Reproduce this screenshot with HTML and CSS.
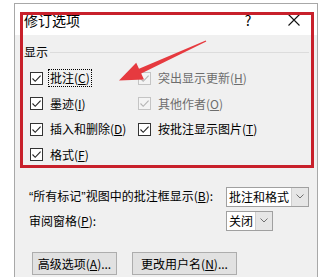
FILE: index.html
```html
<!DOCTYPE html>
<html lang="zh-CN">
<head>
    <meta charset="UTF-8">
    <meta name="viewport" content="width=device-width, initial-scale=1.0">
    <title>修订选项</title>
    <link rel="stylesheet" href="styles.css">
</head>
<body>
    <div class="dialog">
        <div class="titlebar">
            <span class="title">修订选项</span>
            <span class="help">?</span>
            <span class="close">
                <svg width="12" height="12" viewBox="0 0 12 12"><path d="M0.5 0.5 L11.5 11.5 M11.5 0.5 L0.5 11.5" stroke="#111" stroke-width="1.1" fill="none"/></svg>
            </span>
        </div>

        <div class="content">
            <div class="group-head">
                <span>显示</span>
                <span class="rule"></span>
            </div>

            <div class="options">
                <div class="opt">
                    <span class="box"><svg viewBox="0 0 11 11"><path d="M1.5 5.5 L4.2 8.3 L9.6 2.6" /></svg></span>
                    <span class="text focused">批注(<u>C</u>)</span>
                </div>
                <div class="opt disabled">
                    <span class="box"><svg viewBox="0 0 11 11"><path d="M1.5 5.5 L4.2 8.3 L9.6 2.6" /></svg></span>
                    <span class="text">突出显示更新(<u>H</u>)</span>
                </div>
                <div class="opt">
                    <span class="box"><svg viewBox="0 0 11 11"><path d="M1.5 5.5 L4.2 8.3 L9.6 2.6" /></svg></span>
                    <span class="text">墨迹(<u>I</u>)</span>
                </div>
                <div class="opt disabled">
                    <span class="box"><svg viewBox="0 0 11 11"><path d="M1.5 5.5 L4.2 8.3 L9.6 2.6" /></svg></span>
                    <span class="text">其他作者(<u>O</u>)</span>
                </div>
                <div class="opt">
                    <span class="box"><svg viewBox="0 0 11 11"><path d="M1.5 5.5 L4.2 8.3 L9.6 2.6" /></svg></span>
                    <span class="text">插入和删除(<u>D</u>)</span>
                </div>
                <div class="opt">
                    <span class="box"><svg viewBox="0 0 11 11"><path d="M1.5 5.5 L4.2 8.3 L9.6 2.6" /></svg></span>
                    <span class="text">按批注显示图片(<u>T</u>)</span>
                </div>
                <div class="opt">
                    <span class="box"><svg viewBox="0 0 11 11"><path d="M1.5 5.5 L4.2 8.3 L9.6 2.6" /></svg></span>
                    <span class="text">格式(<u>F</u>)</span>
                </div>
            </div>

            <div class="field-row first">
                <span class="field-label"><span class="q">“</span>所有标记<span class="q">”</span>视图中的批注框显示(<u>B</u>):</span>
                <span class="select wide">
                    <span class="value">批注和格式</span>
                    <span class="drop"><svg width="8" height="5" viewBox="0 0 8 5"><path d="M0.5 0.5 L4 4 L7.5 0.5"/></svg></span>
                </span>
            </div>
            <div class="field-row">
                <span class="field-label">审阅窗格(<u>P</u>):</span>
                <span class="select">
                    <span class="value">关闭</span>
                    <span class="drop"><svg width="8" height="5" viewBox="0 0 8 5"><path d="M0.5 0.5 L4 4 L7.5 0.5"/></svg></span>
                </span>
            </div>

            <div class="buttons">
                <button type="button" class="btn advanced">高级选项(<u>A</u>)...</button>
                <button type="button" class="btn rename">更改用户名(<u>N</u>)...</button>
            </div>
        </div>
    </div>

    <!-- red annotation drawn over the screenshot -->
    <div class="highlight"></div>
    <svg class="arrow" width="321" height="277" viewBox="0 0 321 277">
        <polygon points="206.3,41.6 205.7,40.4 139.0,68.8 136.2,62.8 119,80.5 144.0,79.6 141.2,73.4" />
    </svg>
</body>
</html>
```

FILE: styles.css
```css
body {
    margin: 0;
    padding: 0;
    background-color: #ffffff;
    font-family: "Noto Sans CJK SC", "Microsoft YaHei", sans-serif;
    font-size: 12px;
    color: #000;
    width: 321px;
    height: 277px;
    overflow: hidden;
    position: relative;
}

u {
    text-decoration-thickness: 1px;
    text-underline-offset: 1px;
}

.dialog {
    margin: 3px 0 0 14px;
    width: 302px;
    border: 1px solid #a8a8a8;
    border-bottom: none;
}

.titlebar {
    display: flex;
    align-items: center;
    height: 31px;
    background-color: #ffffff;
    padding-left: 9px;
}

.title {
    flex: 1;
    font-size: 14px;
    line-height: 18px;
}

.help,
.close {
    width: 46px;
    display: flex;
    justify-content: center;
    align-items: center;
    font-size: 14px;
    line-height: 18px;
}

.content {
    background-color: #f0f0f0;
    padding: 9px 8px 4px 9px;
}

.group-head {
    display: flex;
    align-items: center;
    line-height: 16px;
}

.group-head .rule {
    flex: 1;
    height: 1px;
    margin-left: 2px;
    background-color: #dcdcdc;
}

.options {
    display: grid;
    grid-template-columns: 108px 1fr;
    grid-auto-rows: 25.5px;
    margin: 5.5px 0 0 6px;
}

.opt {
    display: flex;
    align-items: center;
    gap: 5px;
}

.box {
    width: 11px;
    height: 11px;
    border: 1px solid #333;
    background-color: #fff;
    display: flex;
}

.box svg {
    width: 11px;
    height: 11px;
}

.box path {
    fill: none;
    stroke: #222;
    stroke-width: 1.1;
}

.opt .text {
    line-height: 16px;
    padding: 0 1px;
    border: 1px dotted transparent;
}

.opt .text.focused {
    border-color: #000;
}

.opt.disabled .box {
    border-color: #c4c4c4;
    background-color: #f4f4f4;
}

.opt.disabled .box path {
    stroke: #b4b4b4;
}

.opt.disabled .text {
    color: #6d6d6d;
}

.field-row {
    display: flex;
    align-items: center;
    height: 20px;
    margin-top: 4px;
    padding-left: 5px;
}

.field-row.first {
    margin-top: 19px;
}

.field-label {
    width: 197px;
    flex-shrink: 0;
    white-space: nowrap;
    line-height: 16px;
}

.field-label .q {
    font-family: "Liberation Sans", sans-serif;
    font-size: 13px;
}

.select {
    display: flex;
    height: 18px;
    border: 1px solid #a0a0a0;
    background-color: #ffffff;
}

.select.wide {
    width: 82px;
}

.select .value {
    flex: 1;
    padding-left: 2px;
    line-height: 18px;
}

.select .drop {
    width: 16px;
    margin-left: 2px;
    background-color: #e6e6e6;
    border-left: 1px solid #cfcfcf;
    display: flex;
    justify-content: center;
    align-items: center;
}

.select .drop path {
    fill: none;
    stroke: #707070;
    stroke-width: 1;
}

.buttons {
    display: flex;
    margin-top: 21px;
    padding-left: 8px;
    gap: 15px;
}

.btn {
    height: 23px;
    padding: 0;
    font-family: inherit;
    font-size: 12px;
    color: #000;
    background-color: #e1e1e1;
    border: 1px solid #adadad;
    border-radius: 0;
}

.btn.advanced {
    width: 85px;
}

.btn.rename {
    width: 105px;
}

.highlight {
    position: absolute;
    left: 20px;
    top: 12px;
    width: 294px;
    height: 156px;
    box-sizing: border-box;
    border: 3px solid #c8202b;
    pointer-events: none;
}

.arrow {
    position: absolute;
    left: 0;
    top: 0;
    pointer-events: none;
}

.arrow polygon {
    fill: #e63a3f;
}
```
